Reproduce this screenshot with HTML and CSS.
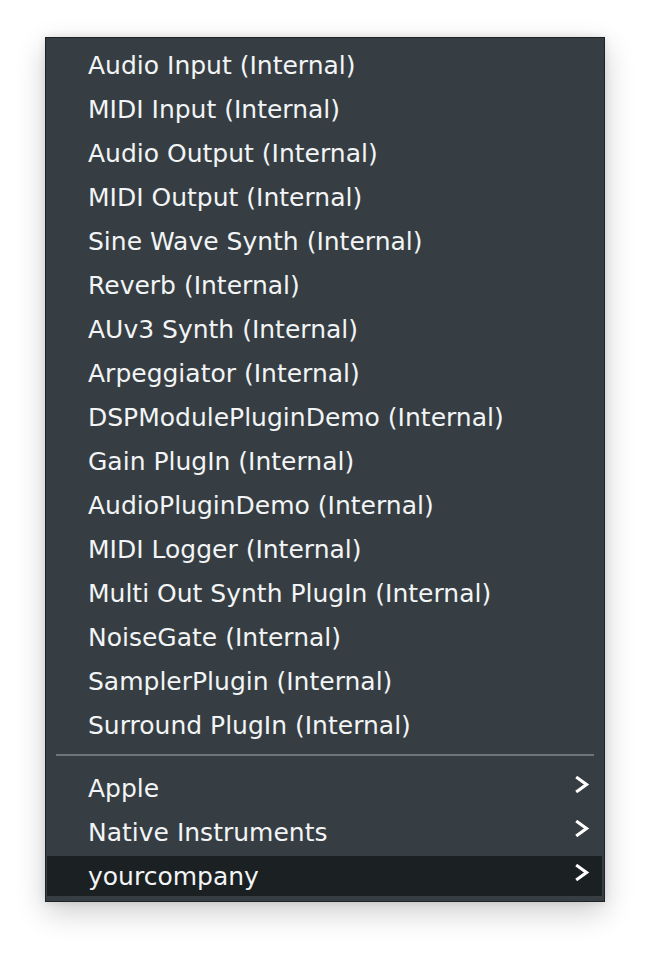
FILE: index.html
```html
<!DOCTYPE html>
<html>
<head>
<meta charset="utf-8">
<link rel="stylesheet" href="styles.css">
</head>
<body>
<div class="menu">
  <div class="item"><span class="label">Audio Input (Internal)</span></div>
  <div class="item"><span class="label">MIDI Input (Internal)</span></div>
  <div class="item"><span class="label">Audio Output (Internal)</span></div>
  <div class="item"><span class="label">MIDI Output (Internal)</span></div>
  <div class="item"><span class="label">Sine Wave Synth (Internal)</span></div>
  <div class="item"><span class="label">Reverb (Internal)</span></div>
  <div class="item"><span class="label">AUv3 Synth (Internal)</span></div>
  <div class="item"><span class="label">Arpeggiator (Internal)</span></div>
  <div class="item"><span class="label">DSPModulePluginDemo (Internal)</span></div>
  <div class="item"><span class="label">Gain PlugIn (Internal)</span></div>
  <div class="item"><span class="label">AudioPluginDemo (Internal)</span></div>
  <div class="item"><span class="label">MIDI Logger (Internal)</span></div>
  <div class="item"><span class="label">Multi Out Synth PlugIn (Internal)</span></div>
  <div class="item"><span class="label">NoiseGate (Internal)</span></div>
  <div class="item"><span class="label">SamplerPlugin (Internal)</span></div>
  <div class="item"><span class="label">Surround PlugIn (Internal)</span></div>
  <div class="separator"></div>
  <div class="item sub"><span class="label">Apple</span>
    <svg class="chev" width="15" height="17" viewBox="0 0 15 17"><path d="M2.5 2 L11.5 8.5 L2.5 15" fill="none" stroke="#fff" stroke-width="3.2" stroke-linecap="square" stroke-linejoin="miter"/></svg>
  </div>
  <div class="item sub"><span class="label">Native Instruments</span>
    <svg class="chev" width="15" height="17" viewBox="0 0 15 17"><path d="M2.5 2 L11.5 8.5 L2.5 15" fill="none" stroke="#fff" stroke-width="3.2" stroke-linecap="square" stroke-linejoin="miter"/></svg>
  </div>
  <div class="item sub active"><span class="label">yourcompany</span>
    <svg class="chev" width="15" height="17" viewBox="0 0 15 17"><path d="M2.5 2 L11.5 8.5 L2.5 15" fill="none" stroke="#fff" stroke-width="3.2" stroke-linecap="square" stroke-linejoin="miter"/></svg>
  </div>
</div>
</body>
</html>
```
FILE: styles.css
```css
html, body {
  margin: 0;
  padding: 0;
  background: #ffffff;
  min-height: 956px;
}
body {
  padding: 37px 0 0 45px;
  box-sizing: border-box;
  font-family: "DejaVu Sans", "Noto Sans", sans-serif;
}
.menu {
  width: 558px;
  background: #363e43;
  border: 1px solid #1e2225;
  padding: 5px 0 3px 0;
  box-shadow: 0 10px 28px rgba(0,0,0,0.20), 0 0 8px rgba(0,0,0,0.10);
}
.item {
  height: 44px;
  display: flex;
  align-items: center;
  justify-content: space-between;
  padding: 0 14px 0 42px;
  position: relative;
  color: #f2f4f5;
  font-size: 25px;
}
.item.active::before {
  content: "";
  position: absolute;
  left: 1px;
  right: 2px;
  top: 2px;
  bottom: 2px;
  background: #1b2023;
}
.label, .chev {
  position: relative;
}
.chev {
  margin-top: -8px;
}
.separator {
  height: 2px;
  margin: 7px 10px 10px 10px;
  background: #6d757a;
}
```
